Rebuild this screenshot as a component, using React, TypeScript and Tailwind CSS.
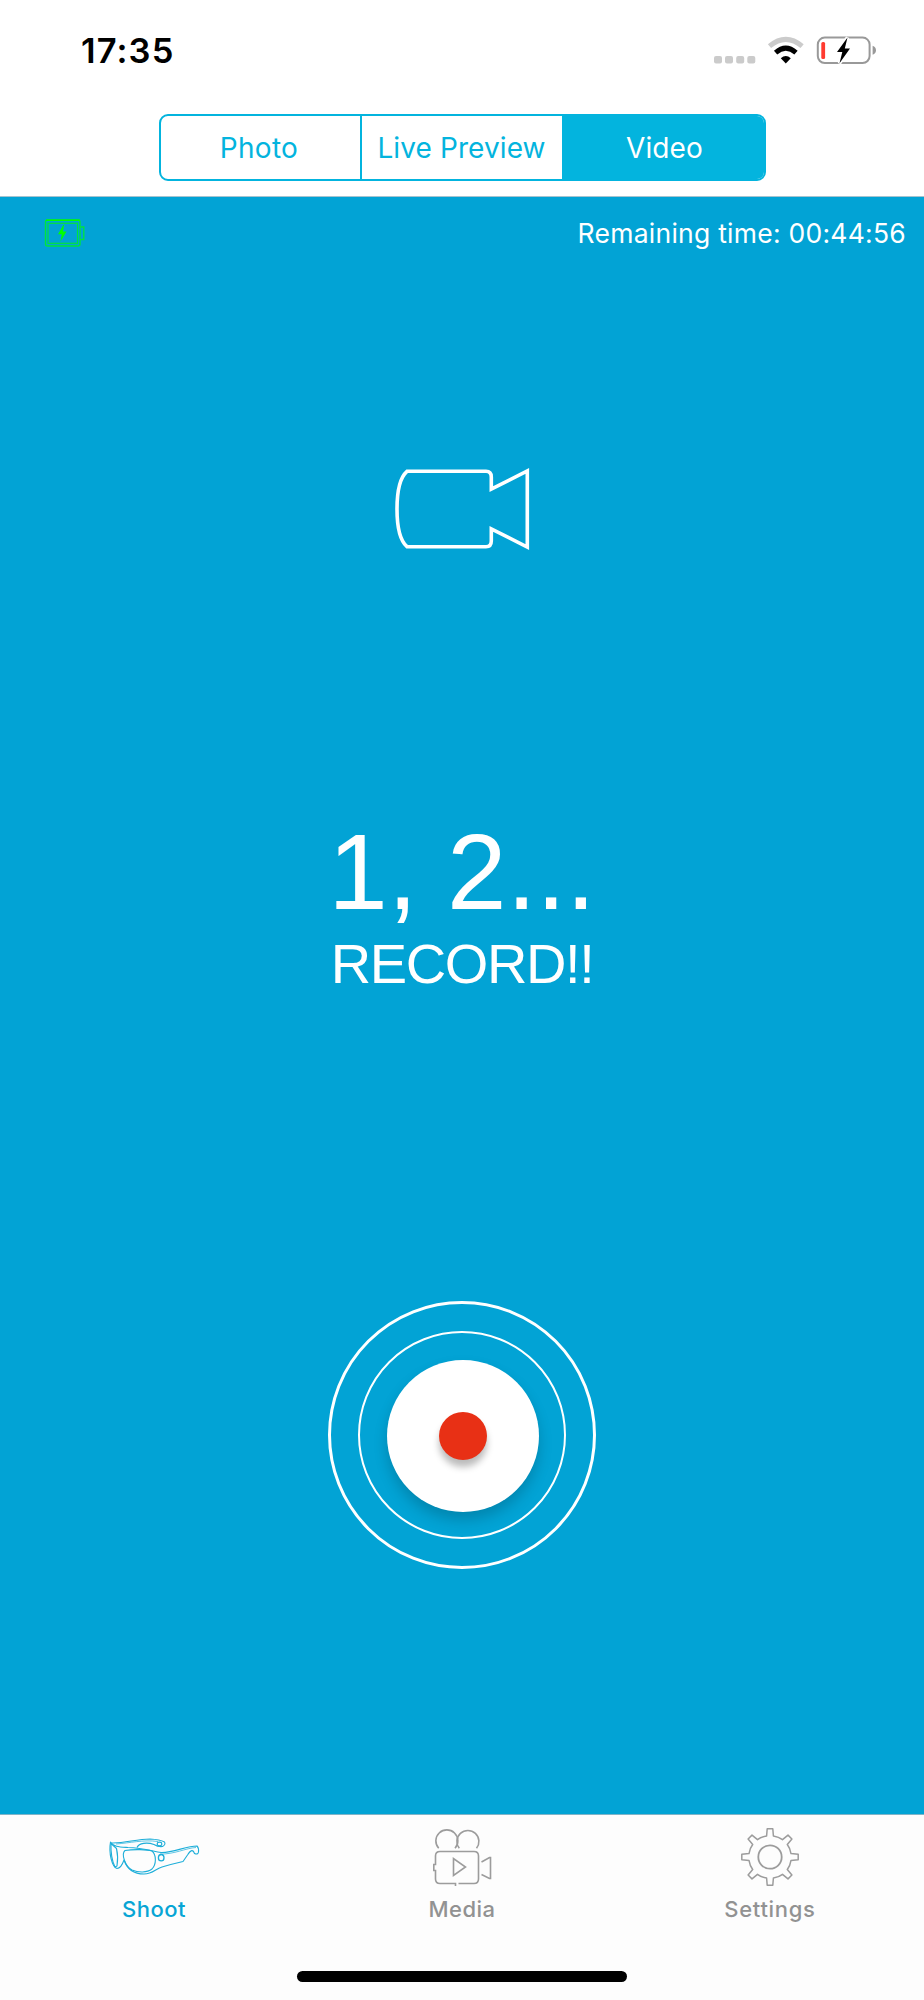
import React from "react";

const StatusBar = () => {
  return (
    <div className="flex h-[114px] items-start justify-between pt-[30px] pl-[81px] pr-[48px]">
      <span className="text-[34.5px] leading-[42px] font-semibold text-black tracking-[1.1px]">
        17:35
      </span>
      <svg className="mt-1" width="164" height="32" viewBox="712 34 164 32" fill="none">
        <g fill="#cbcbcb">
          <rect x="714" y="56" width="8" height="7.5" rx="2" />
          <rect x="725" y="56" width="8" height="7.5" rx="2" />
          <rect x="736.2" y="56" width="8" height="7.5" rx="2" />
          <rect x="747.3" y="56" width="8" height="7.5" rx="2" />
        </g>
        <path d="M769.5 46.2Q785.8 32.6 802.1 46.2" stroke="#cbcbcb" strokeWidth="5" />
        <path d="M775.6 52.6Q785.8 43.7 796 52.6" stroke="#000" strokeWidth="5" />
        <path d="M780.8 58.3Q785.8 53.7 790.8 58.3L785.8 63.4Z" fill="#000" />
        <rect x="817.8" y="37.6" width="51.8" height="25.4" rx="7" stroke="#999" strokeWidth="2" />
        <path d="M872.6 45.8Q876 47 876 50.3T872.6 54.8Z" fill="#999" />
        <rect x="821.3" y="42" width="3.8" height="17" rx="1.5" fill="#ff3b30" />
        <path
          d="M847.5 37.5L837 52H842.3L839.5 63.3L850 48.4H844.8Z"
          fill="#000"
          stroke="#fff"
          strokeWidth="3.5"
          paintOrder="stroke"
        />
      </svg>
    </div>
  );
};

const Segments = () => {
  return (
    <div className="mx-auto flex h-[67px] w-[607px] overflow-hidden rounded-[9px] border-2 border-[#03b4de] text-[28px] text-[#03b4de]">
      <button className="w-[199px] pr-[2px] tracking-[0.3px]">Photo</button>
      <button className="w-[202px] border-l-2 border-[#03b4de] tracking-[0.1px]">
        Live Preview
      </button>
      <button className="flex-1 bg-[#03b4de] pl-[4px] text-white tracking-[0.1px]">
        Video
      </button>
    </div>
  );
};

const CameraBattery = () => {
  return (
    <svg width="42" height="30" viewBox="44 218 42 30" fill="none" stroke="#00e53c">
      <rect x="45.5" y="220" width="34.5" height="26" rx="2" strokeWidth="1.4" />
      <rect x="48" y="223.3" width="29.5" height="20" strokeWidth="1.2" />
      <path d="M46 220.3H80" stroke="#00ff00" strokeWidth="1.5" />
      <path d="M80.5 227H83.8V239.5H80.5" strokeWidth="1.3" />
      <path d="M63.3 225L58 234.3H61.7L60.5 241.5L66.5 231.5H63L64 225Z" fill="#00ff00" stroke="none" />
    </svg>
  );
};

const VideoCamera = () => {
  return (
    <svg className="mx-auto" width="136" height="82" viewBox="394 468 136 82" fill="none">
      <path
        d="M407 471.3H486Q491.3 471.3 491.3 477V489L527.3 471V547L491.3 529V541Q491.3 546.7 486 546.7H407Q397 538 397 509T407 471.3Z"
        stroke="#fff"
        strokeWidth="3.6"
      />
    </svg>
  );
};

const RecordButton = () => {
  return (
    <button className="mx-auto flex size-[268px] items-center justify-center rounded-full border-[3px] border-white">
      <span className="flex size-[208px] items-center justify-center rounded-full border-2 border-white pl-0.5 pt-0.5">
        <span className="flex size-[152px] items-center justify-center rounded-full bg-white shadow-[0_8px_14px_rgba(0,0,0,0.18)]">
          <span className="size-[48px] rounded-full bg-[#e83015] shadow-[0_7px_7px_rgba(0,0,0,0.27)]" />
        </span>
      </span>
    </button>
  );
};

const GlassesIcon = () => {
  return (
    <svg width="94" height="60" viewBox="107 1826 94 60" fill="none" stroke="#1daed9" strokeWidth="1.1" strokeLinejoin="round">
      <path d="M110.500 1841C113 1846 120 1846 128 1846.500C142 1847 152 1850 161 1851.500C173 1852 186 1845 197 1845Q199 1847 198.500 1851Q198 1854 194.500 1852.500Q192.500 1846 187.500 1854L183 1860.500Q172 1863 162 1866C155 1868 153 1873 144 1873C134 1873 127 1868 124 1859Q121 1867.500 117 1867.500C112 1866 108.500 1852 110.500 1841Z" />
      <path d="M125 1849.500C134 1848 147 1848.500 152 1850C156.500 1854 156.500 1863 152 1868C147 1872 138 1871.500 132 1869C125 1865 121 1853 125 1849.500Z" />
      <path d="M111 1842.500L116.500 1847.500Q118.500 1856 117 1865L115 1866Q110.500 1857 111 1842.500" />
      <path d="M111.500 1842C125 1842.500 136 1838 150 1838Q160 1838.500 164.500 1841Q166 1843.500 162.500 1845.500Q158 1846 154 1843.500C147 1841 139 1842 137 1846.500" />
      <path d="M160 1853C174 1853.500 186 1847 196 1846.500" strokeWidth="0.7" />
      <path d="M116 1843C130 1842 143 1838.500 158 1840.500" strokeWidth="0.7" />
      <ellipse cx="159.500" cy="1843" rx="2.300" ry="1.900" />
      <ellipse cx="161.200" cy="1856.700" rx="2.800" ry="3.200" strokeWidth="1.3" />
    </svg>
  );
};

const MediaIcon = () => {
  return (
    <svg width="62" height="60" viewBox="431 1826 62 60" fill="none" stroke="#9c9c9c" strokeWidth="1.6">
      <path d="M438.7 1847.3A11 11 0 1 1 455 1847.3" />
      <path d="M459.3 1847.3A11 11 0 1 1 476.5 1847.3" />
      <path d="M458.5 1882.5H474Q478.5 1882.5 478.5 1878V1855Q478.5 1850.5 474 1850.5H440Q435.5 1850.5 435.5 1855V1863.5H433.8V1869.5H435.500V1878Q435.5 1882.5 440 1882.5H455.5V1885" />
      <path d="M453.5 1857.5V1874.5L465.5 1866Z" />
      <path d="M481.5 1861L489.5 1856.5H490.5V1877.5H489.5L481.5 1873.5" />
    </svg>
  );
};

const SettingsIcon = () => {
  return (
    <svg width="60" height="60" viewBox="-30 -30 60 60" fill="none" stroke="#9c9c9c" strokeWidth="1.5" strokeLinejoin="round">
      <circle r="11.7" strokeWidth="1.8" />
      <path d="M-3.4 -21L-2.8 -28.2H2.8L3.4 -21Q8.8 -20.2 12.5 -17.3L18 -21.9L21.9 -18L17.3 -12.5Q20.2 -8.8 21 -3.4L28.2 -2.8V2.8L21 3.4Q20.2 8.8 17.3 12.5L21.9 18L18 21.9L12.5 17.3Q8.8 20.2 3.4 21L2.8 28.2H-2.8L-3.4 21Q-8.8 20.2 -12.5 17.3L-18 21.9L-21.9 18L-17.3 12.5Q-20.2 8.8 -21 3.4L-28.2 2.8V-2.8L-21 -3.4Q-20.2 -8.8 -17.3 -12.5L-21.9 -18L-18 -21.9L-12.5 -17.3Q-8.8 -20.2 -3.4 -21Z" />
    </svg>
  );
};

const TabBar = () => {
  return (
    <nav className="flex h-[186px] flex-col border-t border-[#7fb4c8] bg-[#fdfdfd]">
      <div className="grid grid-cols-3 pt-[12px] text-[22px] leading-[28px] font-medium text-[#929292]">
        <button className="flex flex-col items-center gap-2 text-[#08a5d5] tracking-[0.5px]">
          <GlassesIcon />
          Shoot
        </button>
        <button className="flex flex-col items-center gap-2 tracking-[0.5px]">
          <MediaIcon />
          Media
        </button>
        <button className="flex flex-col items-center gap-2 tracking-[0.7px]">
          <SettingsIcon />
          Settings
        </button>
      </div>
      <div className="mx-auto mt-auto mb-[18px] h-[11px] w-[330px] rounded-full bg-black" />
    </nav>
  );
};

const App = () => {
  return (
    <div className="flex h-[2000px] w-[924px] flex-col bg-white font-['Inter',sans-serif]">
      <header className="h-[196px]">
        <StatusBar />
        <Segments />
      </header>
      <main className="flex h-[1618px] flex-col border-t border-[#a5c3cf] bg-[#02a3d5] text-white">
        <div className="flex h-[72px] items-center justify-between pl-[44px] pr-[18px]">
          <CameraBattery />
          <span className="pt-0.5 text-[26.5px] tracking-[0.25px]">
            Remaining time: 00:44:56
          </span>
        </div>
        <div className="mt-[199px]">
          <VideoCamera />
        </div>
        <div className="mt-[264px] flex flex-col items-center font-['Liberation_Sans',sans-serif]">
          <span className="text-[107px] leading-[116px]">1, 2...</span>
          <span className="pt-[4px] text-[56px] leading-[60px] tracking-[-1.4px]">
            RECORD!!
          </span>
        </div>
        <div className="mt-[307px]">
          <RecordButton />
        </div>
      </main>
      <TabBar />
    </div>
  );
};

export default App;
